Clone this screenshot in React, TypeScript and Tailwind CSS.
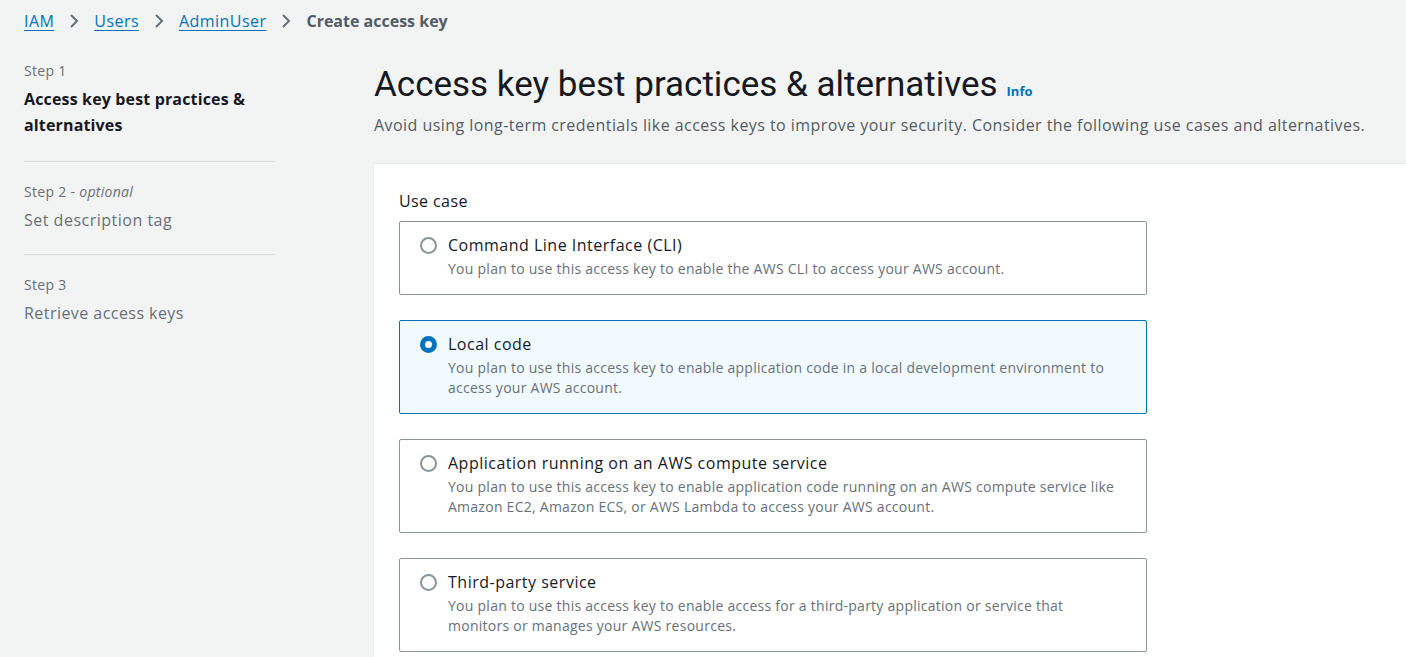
import { useState } from 'react';

const useCases = [
  {
    id: 'cli',
    title: 'Command Line Interface (CLI)',
    description: 'You plan to use this access key to enable the AWS CLI to access your AWS account.',
  },
  {
    id: 'local',
    title: 'Local code',
    description:
      'You plan to use this access key to enable application code in a local development environment to access your AWS account.',
  },
  {
    id: 'compute',
    title: 'Application running on an AWS compute service',
    description:
      'You plan to use this access key to enable application code running on an AWS compute service like Amazon EC2, Amazon ECS, or AWS Lambda to access your AWS account.',
  },
  {
    id: 'third',
    title: 'Third-party service',
    description:
      'You plan to use this access key to enable access for a third-party application or service that monitors or manages your AWS resources.',
  },
];

function Chevron() {
  return (
    <svg width="12" height="16" viewBox="0 0 12 16" className="mx-[14px] text-[#687078]">
      <path d="M3 2l6 6-6 6" fill="none" stroke="currentColor" strokeWidth="2" />
    </svg>
  );
}

export default function App() {
  const [selected, setSelected] = useState('local');

  return (
    <div className="min-h-[657px] bg-[#f2f3f3] font-['Open_Sans',sans-serif] text-[#16191f]">
      {/* Breadcrumbs */}
      <nav className="flex items-center h-[42px] px-6 text-[16px] tracking-[0.45px]">
        <a className="text-[#0073bb] underline underline-offset-[3px] decoration-1">IAM</a>
        <Chevron />
        <a className="text-[#0073bb] underline underline-offset-[3px] decoration-1">Users</a>
        <Chevron />
        <a className="text-[#0073bb] underline underline-offset-[3px] decoration-1">AdminUser</a>
        <Chevron />
        <span className="font-bold text-[#545b64] tracking-normal">Create access key</span>
      </nav>

      <div className="flex">
        {/* Steps */}
        <aside className="w-[250px] ml-6 mt-[19px] shrink-0">
          <div className="pb-[23px] border-b border-[#d5dbdb]">
            <p className="text-[14px] text-[#687078] leading-[20px] tracking-[0.3px]">Step 1</p>
            <p className="text-[16px] font-bold leading-[26px] mt-[5px] tracking-[0.15px]">
              Access key best practices &amp; alternatives
            </p>
          </div>
          <div className="pt-[20px] pb-[21px] border-b border-[#d5dbdb]">
            <p className="text-[14px] text-[#687078] leading-[20px] tracking-[0.3px]">
              Step 2 - <i>optional</i>
            </p>
            <p className="text-[16px] text-[#687078] leading-[26px] mt-[5px] tracking-[0.5px]">Set description tag</p>
          </div>
          <div className="pt-[20px]">
            <p className="text-[14px] text-[#687078] leading-[20px] tracking-[0.3px]">Step 3</p>
            <p className="text-[16px] text-[#687078] leading-[26px] mt-[5px] tracking-[0.45px]">Retrieve access keys</p>
          </div>
        </aside>

        {/* Main */}
        <main className="flex-1 ml-[100px] mt-[20px]">
          <div className="flex items-baseline">
            <h1 className="font-['Roboto',sans-serif] text-[35px] leading-[46px] font-normal text-[#16191f]">
              Access key best practices &amp; alternatives
            </h1>
            <a className="ml-[9px] text-[13px] font-bold text-[#0073bb]">Info</a>
          </div>
          <p className="text-[16px] text-[#545b64] leading-[24px] mt-[5px] tracking-[0.45px]">
            Avoid using long-term credentials like access keys to improve your security. Consider the following use cases and
            alternatives.
          </p>

          <section className="mt-[26px] bg-white border-t border-l border-[#eaeded] pl-[25px] pt-[26px] pb-4 -ml-px">
            <p className="text-[16px] leading-[22px] text-[#16191f] tracking-[0.4px]">Use case</p>
            <div className="mt-[9px] flex flex-col gap-[25px] w-[748px]">
              {useCases.map((u) => {
                const active = selected === u.id;
                return (
                  <label
                    key={u.id}
                    onClick={() => setSelected(u.id)}
                    className={`flex items-start gap-[11px] px-[20px] pt-[12px] pb-[15px] rounded-[2px] border cursor-pointer ${
                      active ? 'border-[#0073bb] bg-[#f1faff]' : 'border-[#879596] bg-white'
                    }`}
                  >
                    <span
                      className={`mt-[3px] w-[17px] h-[17px] rounded-full shrink-0 flex items-center justify-center ${
                        active ? 'bg-[#0073bb]' : 'border-2 border-[#879596] bg-white'
                      }`}
                    >
                      {active && <span className="w-[7px] h-[7px] rounded-full bg-white" />}
                    </span>
                    <span className="flex flex-col">
                      <span className="text-[16px] leading-[22px] text-[#16191f] tracking-[0.5px]">{u.title}</span>
                      <span className="text-[14px] leading-[20px] text-[#687078] tracking-[0.26px] mt-[3px]">
                        {u.description}
                      </span>
                    </span>
                  </label>
                );
              })}
            </div>
          </section>
        </main>
      </div>
    </div>
  );
}
